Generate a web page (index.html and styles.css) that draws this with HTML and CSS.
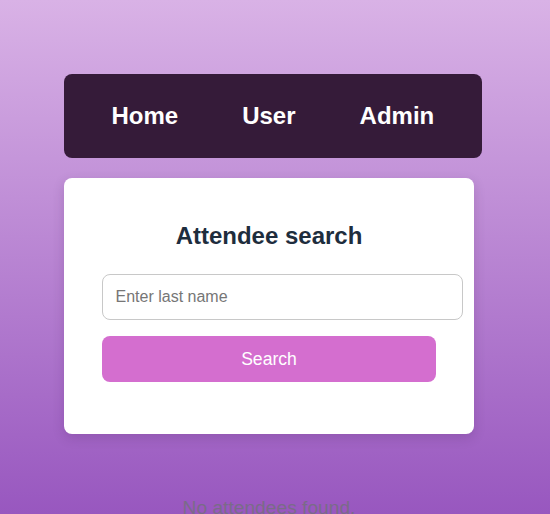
FILE: index.html
```html
<!DOCTYPE html>
<html lang="en">
<head>
<meta charset="utf-8">
<title>Attendee search</title>
<link rel="stylesheet" href="styles.css">
</head>
<body>
<div class="page">
  <nav class="nav">
    <a class="nav-link" href="#">Home</a>
    <a class="nav-link" href="#">User</a>
    <a class="nav-link" href="#">Admin</a>
  </nav>
  <div class="column">
    <section class="card">
      <h2 class="title">Attendee search</h2>
      <form class="form">
        <input class="input" type="text" placeholder="Enter last name">
        <button class="button" type="button">Search</button>
      </form>
    </section>
    <p class="empty">No attendees found.</p>
  </div>
</div>
</body>
</html>
```
FILE: styles.css
```css
html {
  height: 100%;
  background: linear-gradient(to bottom, #d9b2e6 0%, #9857bf 100%);
}
body {
  margin: 0;
  font-family: "Liberation Sans", Arial, sans-serif;
}
.page {
  display: flex;
  flex-direction: column;
  align-items: flex-start;
  padding: 74px 0 0 64px;
}
.nav {
  display: flex;
  background: #351b39;
  border-radius: 8px;
  padding: 16px 15.5px;
}
.nav-link {
  display: block;
  padding: 12px 32px;
  color: #ffffff;
  font-size: 24px;
  font-weight: bold;
  text-decoration: none;
  line-height: 27.6px;
}
.column {
  display: flex;
  flex-direction: column;
  width: 410px;
  margin-top: 20px;
}
.card {
  box-sizing: border-box;
  width: 410px;
  background: #ffffff;
  border-radius: 8px;
  padding: 44px 38px 52px;
  box-shadow: 0 4px 12px rgba(60, 20, 80, 0.18);
}
.title {
  margin: 0 0 25px;
  text-align: center;
  font-size: 24px;
  font-weight: bold;
  line-height: 27px;
  color: #1e2d3d;
}
.form {
  display: flex;
  flex-direction: column;
  align-items: flex-start;
  gap: 16px;
}
.input {
  width: 100%;
  box-sizing: content-box;
  height: 20px;
  padding: 12px 12.5px;
  border: 1px solid #c8c8c8;
  border-radius: 8px;
  font-family: "Liberation Sans", Arial, sans-serif;
  font-size: 16px;
  color: #333;
  outline: none;
}
.input::placeholder {
  color: #767676;
}
.button {
  width: 100%;
  height: 46px;
  padding: 2px 0 0;
  border: none;
  border-radius: 8px;
  background: #d46ecf;
  color: #ffffff;
  font-family: "Liberation Sans", Arial, sans-serif;
  font-size: 17.6px;
  cursor: pointer;
}
.empty {
  margin: 63px 0 0;
  text-align: center;
  font-size: 19.2px;
  color: #7a6b88;
}
```
